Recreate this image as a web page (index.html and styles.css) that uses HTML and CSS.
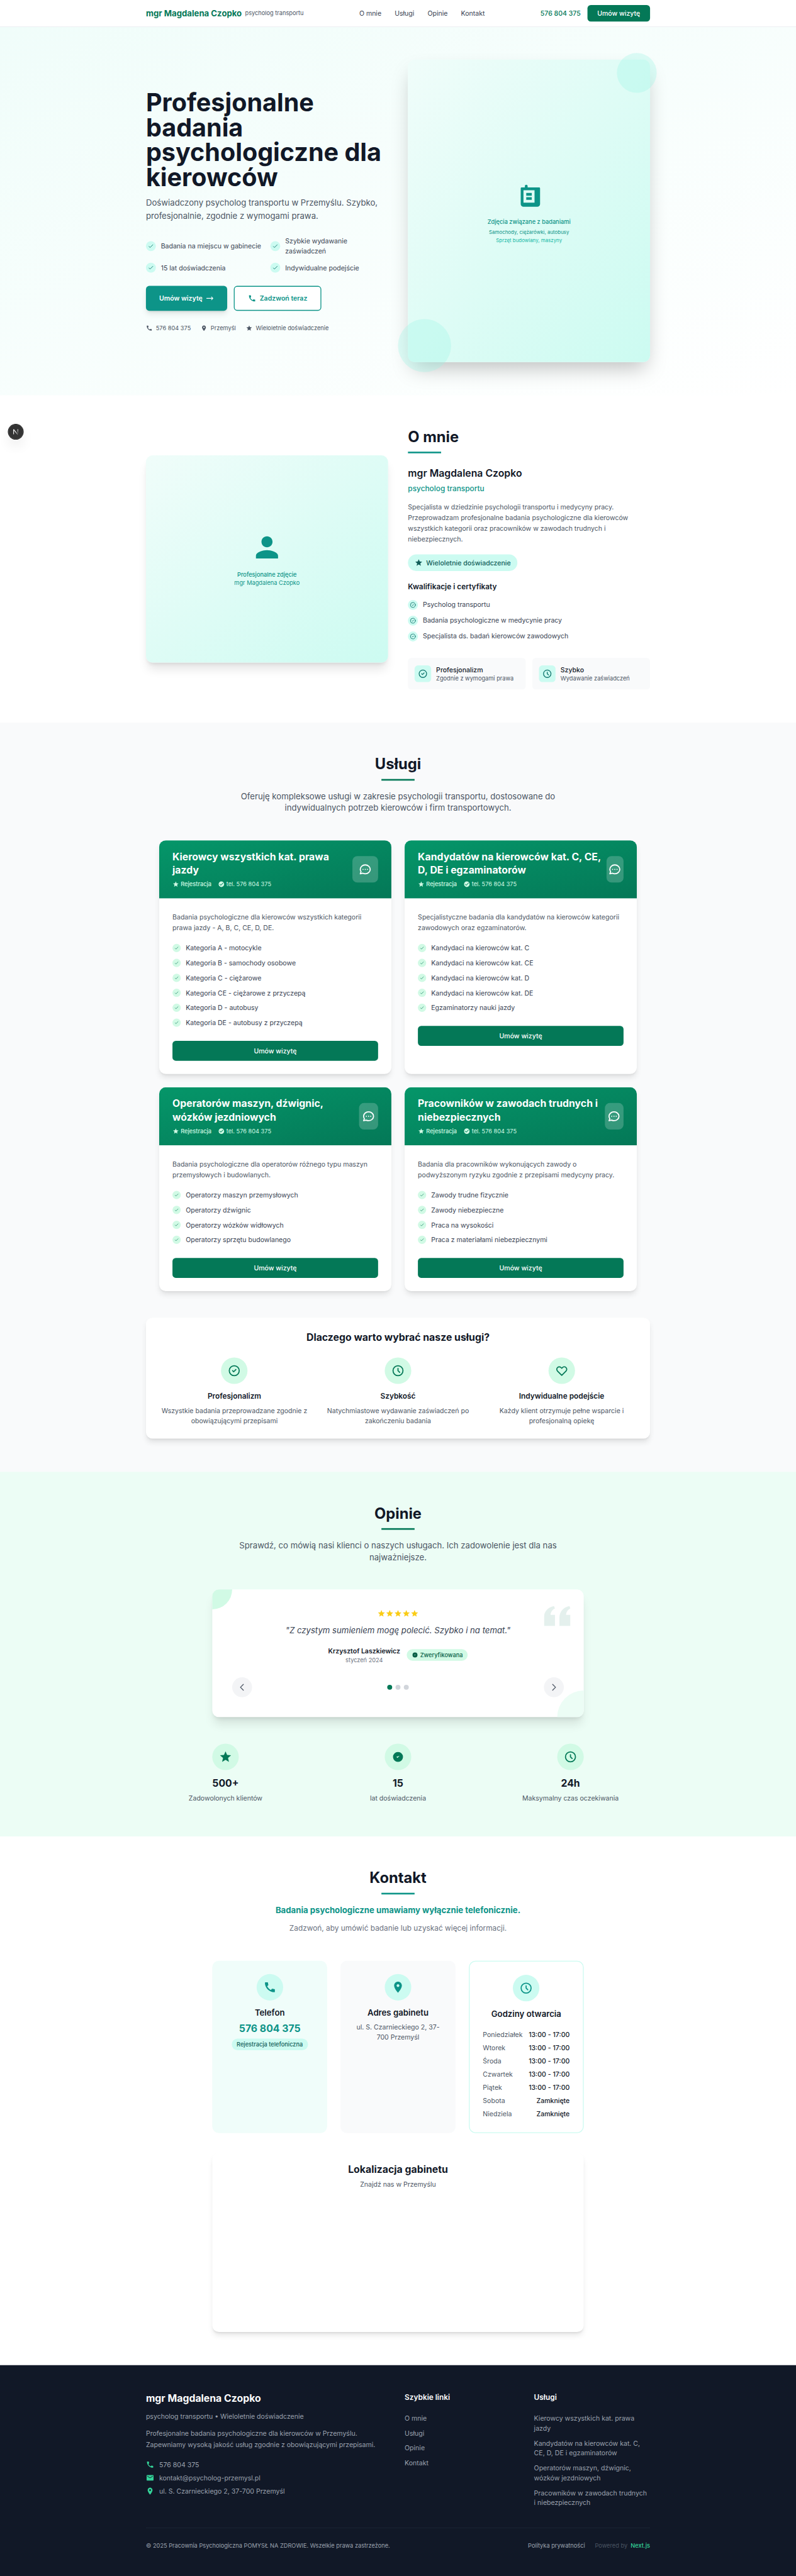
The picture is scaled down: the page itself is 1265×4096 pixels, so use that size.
FILE: index.html
```html
<!DOCTYPE html>
<html lang="pl">
<head>
<meta charset="utf-8">
<meta name="viewport" content="width=device-width, initial-scale=1">
<title>mgr Magdalena Czopko – psycholog transportu</title>
<link rel="stylesheet" href="styles.css">
</head>
<body>
<svg class="sprite" aria-hidden="true">
  <symbol id="i-phone" viewBox="0 0 24 24"><path fill="currentColor" d="M20.01 15.38c-1.23 0-2.42-.2-3.53-.56-.35-.12-.74-.03-1.01.24l-1.57 1.97c-2.83-1.35-5.48-3.9-6.89-6.83l1.95-1.66c.27-.28.35-.67.24-1.02-.37-1.11-.56-2.3-.56-3.53 0-.54-.45-.99-.99-.99H4.19C3.65 3 3 3.24 3 3.99 3 13.28 10.73 21 20.01 21c.71 0 .99-.63.99-1.18v-3.45c0-.54-.45-.99-.99-.99z"/></symbol>
  <symbol id="i-pin" viewBox="0 0 24 24"><path fill="currentColor" d="M12 2C8.13 2 5 5.13 5 9c0 5.25 7 13 7 13s7-7.75 7-13c0-3.87-3.13-7-7-7zm0 9.5c-1.38 0-2.5-1.12-2.5-2.5s1.12-2.5 2.5-2.5 2.5 1.12 2.5 2.5-1.12 2.5-2.5 2.5z"/></symbol>
  <symbol id="i-star" viewBox="0 0 24 24"><path fill="currentColor" d="M12 17.27L18.18 21l-1.64-7.03L22 9.24l-7.19-.61L12 2 9.19 8.63 2 9.24l5.46 4.73L5.82 21z"/></symbol>
  <symbol id="i-mail" viewBox="0 0 24 24"><path fill="currentColor" d="M20 4H4c-1.1 0-1.99.9-1.99 2L2 18c0 1.1.9 2 2 2h16c1.1 0 2-.9 2-2V6c0-1.1-.9-2-2-2zm0 4l-8 5-8-5V6l8 5 8-5v2z"/></symbol>
  <symbol id="i-person" viewBox="0 0 24 24"><path fill="currentColor" d="M12 12c2.21 0 4-1.79 4-4s-1.79-4-4-4-4 1.79-4 4 1.79 4 4 4zm0 2c-2.67 0-8 1.34-8 4v2h16v-2c0-2.66-5.33-4-8-4z"/></symbol>
  <symbol id="i-board" viewBox="0 0 24 24"><path fill="currentColor" fill-rule="evenodd" d="M9 7V6a1 1 0 0 1 2 0v1h8.5a.7.7 0 0 1 .5.7V19a2 2 0 0 1-2 2H8a2 2 0 0 1-2-2V7.7a.7.7 0 0 1 .5-.7zM8 9v9h8V9zM10 11h4v2h-4zM10 14h4v2h-4z"/></symbol>
  <symbol id="i-done" viewBox="0 0 24 24"><path fill="currentColor" d="M12 2C6.48 2 2 6.48 2 12s4.48 10 10 10 10-4.48 10-10S17.52 2 12 2zm-2 15l-5-5 1.41-1.41L10 14.17l7.59-7.59L19 8l-9 9z"/></symbol>
  <symbol id="i-verified" viewBox="0 0 24 24"><path fill="currentColor" d="M9 12l2 2 4-4m6 2a9 9 0 11-18 0 9 9 0 0118 0z"/></symbol>
  <symbol id="i-quote" viewBox="0 0 24 24"><path fill="currentColor" d="M14.017 21v-7.391c0-5.704 3.731-9.57 8.983-10.609l.995 2.151c-2.432.917-3.995 3.638-3.995 5.849h4v10h-9.983zm-14.017 0v-7.391c0-5.704 3.748-9.57 9-10.609l.996 2.151c-2.433.917-3.996 3.638-3.996 5.849h3.983v10h-9.983z"/></symbol>
  <symbol id="i-check" viewBox="0 0 24 24"><path class="ln" d="M5 13l4 4L19 7"/></symbol>
  <symbol id="i-ring" viewBox="0 0 24 24"><path class="ln" d="M9 12l2 2 4-4m6 2a9 9 0 11-18 0 9 9 0 0118 0z"/></symbol>
  <symbol id="i-clock" viewBox="0 0 24 24"><path class="ln" d="M12 8v4l3 3m6-3a9 9 0 11-18 0 9 9 0 0118 0z"/></symbol>
  <symbol id="i-heart" viewBox="0 0 24 24"><path class="ln" d="M4.318 6.318a4.5 4.5 0 000 6.364L12 20.364l7.682-7.682a4.5 4.5 0 00-6.364-6.364L12 7.636l-1.318-1.318a4.5 4.5 0 00-6.364 0z"/></symbol>
  <symbol id="i-arrow" viewBox="0 0 24 24"><path class="ln" d="M17 8l4 4m0 0l-4 4m4-4H3"/></symbol>
  <symbol id="i-prev" viewBox="0 0 24 24"><path class="ln" d="M15 19l-7-7 7-7"/></symbol>
  <symbol id="i-next" viewBox="0 0 24 24"><path class="ln" d="M9 5l7 7-7 7"/></symbol>
  <symbol id="i-chat" viewBox="0 0 24 24"><path class="ln" d="M8 12h.01M12 12h.01M16 12h.01M21 12c0 4.418-4.03 8-9 8a9.863 9.863 0 01-4.255-.949L3 20l1.395-3.72C3.512 15.042 3 13.574 3 12c0-4.418 4.03-8 9-8s9 3.582 9 8z"/></symbol>
</svg>

<div class="page">
<header class="top">
  <div class="wrap top-row">
    <div class="brand"><span class="brand-name">mgr Magdalena Czopko</span><span class="brand-sub">psycholog transportu</span></div>
    <nav class="nav"><a>O mnie</a><a>Usługi</a><a>Opinie</a><a>Kontakt</a></nav>
    <div class="top-cta"><a class="top-phone">576 804 375</a><a class="top-btn">Umów wizytę</a></div>
  </div>
</header>

<main>
<section class="hero">
  <div class="wrap split">
    <div>
      <h1>Profesjonalne badania psychologiczne dla kierowców</h1>
      <p class="lead">Doświadczony psycholog transportu w Przemyślu. Szybko, profesjonalnie, zgodnie z wymogami prawa.</p>
      <ul class="feats">
        <li><i class="dot24"><svg class="s16"><use href="#i-check"/></svg></i>Badania na miejscu w gabinecie</li>
        <li><i class="dot24"><svg class="s16"><use href="#i-check"/></svg></i>Szybkie wydawanie zaświadczeń</li>
        <li><i class="dot24"><svg class="s16"><use href="#i-check"/></svg></i>15 lat doświadczenia</li>
        <li><i class="dot24"><svg class="s16"><use href="#i-check"/></svg></i>Indywidualne podejście</li>
      </ul>
      <div class="btns">
        <a class="btn btn-fill">Umów wizytę<svg class="s20"><use href="#i-arrow"/></svg></a>
        <a class="btn btn-line"><svg class="s20"><use href="#i-phone"/></svg>Zadzwoń teraz</a>
      </div>
      <div class="facts">
        <span><svg class="s16"><use href="#i-phone"/></svg>576 804 375</span>
        <span><svg class="s16"><use href="#i-pin"/></svg>Przemyśl</span>
        <span><svg class="s16"><use href="#i-star"/></svg>Wieloletnie doświadczenie</span>
      </div>
    </div>
    <div class="hero-media">
      <div class="photo photo-tall">
        <svg class="s80"><use href="#i-board"/></svg>
        <p class="cap">Zdjęcia związane z badaniami</p>
        <p class="cap-s">Samochody, ciężarówki, autobusy</p>
        <p class="cap-s light">Sprzęt budowlany, maszyny</p>
      </div>
      <span class="bubble bubble-a"></span><span class="bubble bubble-b"></span>
    </div>
  </div>
</section>

<section class="about">
  <div class="wrap split">
    <div class="photo photo-wide">
      <svg class="s80"><use href="#i-person"/></svg>
      <p class="cap">Profesjonalne zdjęcie</p>
      <p class="cap reg">mgr Magdalena Czopko</p>
    </div>
    <div>
      <h2>O mnie</h2>
      <div class="bar teal"></div>
      <h3 class="about-name">mgr Magdalena Czopko</h3>
      <p class="about-role">psycholog transportu</p>
      <p class="about-text">Specjalista w dziedzinie psychologii transportu i medycyny pracy. Przeprowadzam profesjonalne badania psychologiczne dla kierowców wszystkich kategorii oraz pracowników w zawodach trudnych i niebezpiecznych.</p>
      <span class="exp"><svg class="s20"><use href="#i-star"/></svg>Wieloletnie doświadczenie</span>
      <h4>Kwalifikacje i certyfikaty</h4>
      <ul class="quals">
        <li><i class="dot24"><svg class="s16"><use href="#i-ring"/></svg></i>Psycholog transportu</li>
        <li><i class="dot24"><svg class="s16"><use href="#i-ring"/></svg></i>Badania psychologiczne w medycynie pracy</li>
        <li><i class="dot24"><svg class="s16"><use href="#i-ring"/></svg></i>Specjalista ds. badań kierowców zawodowych</li>
      </ul>
      <div class="perks">
        <div class="perk"><i class="tile"><svg class="s24"><use href="#i-ring"/></svg></i><div><b>Profesjonalizm</b><small>Zgodnie z wymogami prawa</small></div></div>
        <div class="perk"><i class="tile"><svg class="s24"><use href="#i-clock"/></svg></i><div><b>Szybko</b><small>Wydawanie zaświadczeń</small></div></div>
      </div>
    </div>
  </div>
</section>

<section class="services">
  <div class="wrap">
    <div class="head">
      <h2>Usługi</h2>
      <div class="bar"></div>
      <p>Oferuję kompleksowe usługi w zakresie psychologii transportu, dostosowane do indywidualnych potrzeb kierowców i firm transportowych.</p>
    </div>
    <div class="cards">
      <article class="card">
        <header><div><h3>Kierowcy wszystkich kat. prawa jazdy</h3><p class="meta"><span class="med"><svg class="s16"><use href="#i-star"/></svg>Rejestracja</span><span><svg class="s16"><use href="#i-done"/></svg>tel. 576 804 375</span></p></div><i class="chat"><svg class="s32"><use href="#i-chat"/></svg></i></header>
        <div class="body">
          <p>Badania psychologiczne dla kierowców wszystkich kategorii prawa jazdy - A, B, C, CE, D, DE.</p>
          <ul>
            <li><i><svg class="s12"><use href="#i-check"/></svg></i>Kategoria A - motocykle</li>
            <li><i><svg class="s12"><use href="#i-check"/></svg></i>Kategoria B - samochody osobowe</li>
            <li><i><svg class="s12"><use href="#i-check"/></svg></i>Kategoria C - ciężarowe</li>
            <li><i><svg class="s12"><use href="#i-check"/></svg></i>Kategoria CE - ciężarowe z przyczepą</li>
            <li><i><svg class="s12"><use href="#i-check"/></svg></i>Kategoria D - autobusy</li>
            <li><i><svg class="s12"><use href="#i-check"/></svg></i>Kategoria DE - autobusy z przyczepą</li>
          </ul>
          <a class="card-btn">Umów wizytę</a>
        </div>
      </article>
      <article class="card">
        <header><div><h3>Kandydatów na kierowców kat. C, CE, D, DE i egzaminatorów</h3><p class="meta"><span class="med"><svg class="s16"><use href="#i-star"/></svg>Rejestracja</span><span><svg class="s16"><use href="#i-done"/></svg>tel. 576 804 375</span></p></div><i class="chat"><svg class="s32"><use href="#i-chat"/></svg></i></header>
        <div class="body">
          <p>Specjalistyczne badania dla kandydatów na kierowców kategorii zawodowych oraz egzaminatorów.</p>
          <ul>
            <li><i><svg class="s12"><use href="#i-check"/></svg></i>Kandydaci na kierowców kat. C</li>
            <li><i><svg class="s12"><use href="#i-check"/></svg></i>Kandydaci na kierowców kat. CE</li>
            <li><i><svg class="s12"><use href="#i-check"/></svg></i>Kandydaci na kierowców kat. D</li>
            <li><i><svg class="s12"><use href="#i-check"/></svg></i>Kandydaci na kierowców kat. DE</li>
            <li><i><svg class="s12"><use href="#i-check"/></svg></i>Egzaminatorzy nauki jazdy</li>
          </ul>
          <a class="card-btn">Umów wizytę</a>
        </div>
      </article>
      <article class="card">
        <header><div><h3>Operatorów maszyn, dźwignic, wózków jezdniowych</h3><p class="meta"><span class="med"><svg class="s16"><use href="#i-star"/></svg>Rejestracja</span><span><svg class="s16"><use href="#i-done"/></svg>tel. 576 804 375</span></p></div><i class="chat"><svg class="s32"><use href="#i-chat"/></svg></i></header>
        <div class="body">
          <p>Badania psychologiczne dla operatorów różnego typu maszyn przemysłowych i budowlanych.</p>
          <ul>
            <li><i><svg class="s12"><use href="#i-check"/></svg></i>Operatorzy maszyn przemysłowych</li>
            <li><i><svg class="s12"><use href="#i-check"/></svg></i>Operatorzy dźwignic</li>
            <li><i><svg class="s12"><use href="#i-check"/></svg></i>Operatorzy wózków widłowych</li>
            <li><i><svg class="s12"><use href="#i-check"/></svg></i>Operatorzy sprzętu budowlanego</li>
          </ul>
          <a class="card-btn">Umów wizytę</a>
        </div>
      </article>
      <article class="card">
        <header><div><h3>Pracowników w zawodach trudnych i niebezpiecznych</h3><p class="meta"><span class="med"><svg class="s16"><use href="#i-star"/></svg>Rejestracja</span><span><svg class="s16"><use href="#i-done"/></svg>tel. 576 804 375</span></p></div><i class="chat"><svg class="s32"><use href="#i-chat"/></svg></i></header>
        <div class="body">
          <p>Badania dla pracowników wykonujących zawody o podwyższonym ryzyku zgodnie z przepisami medycyny pracy.</p>
          <ul>
            <li><i><svg class="s12"><use href="#i-check"/></svg></i>Zawody trudne fizycznie</li>
            <li><i><svg class="s12"><use href="#i-check"/></svg></i>Zawody niebezpieczne</li>
            <li><i><svg class="s12"><use href="#i-check"/></svg></i>Praca na wysokości</li>
            <li><i><svg class="s12"><use href="#i-check"/></svg></i>Praca z materiałami niebezpiecznymi</li>
          </ul>
          <a class="card-btn">Umów wizytę</a>
        </div>
      </article>
    </div>
    <div class="why">
      <h3>Dlaczego warto wybrać nasze usługi?</h3>
      <div class="thirds">
        <div><i class="orb"><svg class="s32"><use href="#i-ring"/></svg></i><h4>Profesjonalizm</h4><p>Wszystkie badania przeprowadzane zgodnie z obowiązującymi przepisami</p></div>
        <div><i class="orb"><svg class="s32"><use href="#i-clock"/></svg></i><h4>Szybkość</h4><p>Natychmiastowe wydawanie zaświadczeń po zakończeniu badania</p></div>
        <div><i class="orb"><svg class="s32"><use href="#i-heart"/></svg></i><h4>Indywidualne podejście</h4><p>Każdy klient otrzymuje pełne wsparcie i profesjonalną opiekę</p></div>
      </div>
    </div>
  </div>
</section>

<section class="reviews">
  <div class="wrap">
    <div class="head">
      <h2>Opinie</h2>
      <div class="bar"></div>
      <p>Sprawdź, co mówią nasi klienci o naszych usługach. Ich zadowolenie jest dla nas najważniejsze.</p>
    </div>
    <div class="review">
      <span class="corner-a"></span><span class="corner-b"></span>
      <svg class="quote"><use href="#i-quote"/></svg>
      <div class="stars"><svg class="s20"><use href="#i-star"/></svg><svg class="s20"><use href="#i-star"/></svg><svg class="s20"><use href="#i-star"/></svg><svg class="s20"><use href="#i-star"/></svg><svg class="s20"><use href="#i-star"/></svg></div>
      <blockquote>"Z czystym sumieniem mogę polecić. Szybko i na temat."</blockquote>
      <div class="author">
        <div><b>Krzysztof Laszkiewicz</b><small>styczeń 2024</small></div>
        <span class="ok"><svg class="s16"><use href="#i-verified"/></svg>Zweryfikowana</span>
      </div>
      <div class="pager">
        <button><svg class="s24"><use href="#i-prev"/></svg></button>
        <div class="dots"><i class="on"></i><i></i><i></i></div>
        <button><svg class="s24"><use href="#i-next"/></svg></button>
      </div>
    </div>
    <div class="thirds stats">
      <div><i class="orb"><svg class="s32"><use href="#i-star"/></svg></i><b>500+</b><p>Zadowolonych klientów</p></div>
      <div><i class="orb"><svg class="s32"><use href="#i-verified"/></svg></i><b>15</b><p>lat doświadczenia</p></div>
      <div><i class="orb"><svg class="s32"><use href="#i-clock"/></svg></i><b>24h</b><p>Maksymalny czas oczekiwania</p></div>
    </div>
  </div>
</section>

<section class="contact">
  <div class="head">
    <h2>Kontakt</h2>
    <div class="bar teal"></div>
    <p class="strong">Badania psychologiczne umawiamy wyłącznie telefonicznie.</p>
    <p class="soft">Zadzwoń, aby umówić badanie lub uzyskać więcej informacji.</p>
  </div>
  <div class="boxes">
    <div class="box box-phone"><i class="orb"><svg class="s32"><use href="#i-phone"/></svg></i><h3>Telefon</h3><a class="big">576 804 375</a><span class="tag">Rejestracja telefoniczna</span></div>
    <div class="box box-addr"><i class="orb"><svg class="s32"><use href="#i-pin"/></svg></i><h3>Adres gabinetu</h3><p>ul. S. Czarnieckiego 2, 37-700 Przemyśl</p></div>
    <div class="box box-hours"><i class="orb"><svg class="s32"><use href="#i-clock"/></svg></i><h3>Godziny otwarcia</h3>
      <dl>
        <div><dt>Poniedziałek</dt><dd>13:00 - 17:00</dd></div>
        <div><dt>Wtorek</dt><dd>13:00 - 17:00</dd></div>
        <div><dt>Środa</dt><dd>13:00 - 17:00</dd></div>
        <div><dt>Czwartek</dt><dd>13:00 - 17:00</dd></div>
        <div><dt>Piątek</dt><dd>13:00 - 17:00</dd></div>
        <div><dt>Sobota</dt><dd>Zamknięte</dd></div>
        <div><dt>Niedziela</dt><dd>Zamknięte</dd></div>
      </dl>
    </div>
  </div>
  <div class="map"><h3>Lokalizacja gabinetu</h3><p>Znajdź nas w Przemyślu</p><div class="map-area"></div></div>
</section>
</main>

<footer class="foot">
  <div class="wrap">
    <div class="foot-grid">
      <div class="foot-main">
        <h3>mgr Magdalena Czopko</h3>
        <p>psycholog transportu • Wieloletnie doświadczenie</p>
        <p class="desc">Profesjonalne badania psychologiczne dla kierowców w Przemyślu. Zapewniamy wysoką jakość usług zgodnie z obowiązującymi przepisami.</p>
        <ul class="reach">
          <li><svg class="s20"><use href="#i-phone"/></svg>576 804 375</li>
          <li><svg class="s20"><use href="#i-mail"/></svg>kontakt@psycholog-przemysl.pl</li>
          <li><svg class="s20"><use href="#i-pin"/></svg>ul. S. Czarnieckiego 2, 37-700 Przemyśl</li>
        </ul>
      </div>
      <div><h4>Szybkie linki</h4><ul class="links"><li>O mnie</li><li>Usługi</li><li>Opinie</li><li>Kontakt</li></ul></div>
      <div><h4>Usługi</h4><ul class="links"><li>Kierowcy wszystkich kat. prawa jazdy</li><li>Kandydatów na kierowców kat. C, CE, D, DE i egzaminatorów</li><li>Operatorów maszyn, dźwignic, wózków jezdniowych</li><li>Pracowników w zawodach trudnych i niebezpiecznych</li></ul></div>
    </div>
    <div class="foot-end">
      <span>© 2025 Pracownia Psychologiczna POMYSŁ NA ZDROWIE. Wszelkie prawa zastrzeżone.</span>
      <div class="foot-right"><span>Polityka prywatności</span><span class="pow">Powered by<b>Next.js</b></span></div>
    </div>
  </div>
</footer>

<div class="dev"><svg viewBox="0 0 40 40" fill="none"><defs><linearGradient id="n1" x1="0" y1="13" x2="0" y2="27" gradientUnits="userSpaceOnUse"><stop offset="0" stop-color="#fff"/><stop offset="1" stop-color="#fff" stop-opacity="0"/></linearGradient><linearGradient id="n2" x1="20" y1="20" x2="27" y2="29" gradientUnits="userSpaceOnUse"><stop offset="0" stop-color="#fff"/><stop offset="1" stop-color="#fff" stop-opacity=".1"/></linearGradient></defs><path d="M14.3 26.5V13.5" stroke="#fff" stroke-width="1.8"/><path d="M14.3 13.8L25.5 28" stroke="url(#n2)" stroke-width="1.9"/><path d="M25.5 13v13" stroke="url(#n1)" stroke-width="1.7"/></svg></div>
</div>
</body>
</html>
```
FILE: styles.css
```css
/* The page is laid out on a 1920px canvas (1rem = 10px) and scaled to a 1265px window */
html { font-size: 10px; }
*, *::before, *::after { box-sizing: border-box; margin: 0; padding: 0; }
body { width: 100%; height: 4096px; overflow: hidden; background: #fff; }
.page {
  position: relative;
  width: 192rem;
  height: 621.68rem;
  margin: 0 -65.5rem -212.08rem 0;
  overflow: hidden;
  transform: scale(.658854);
  transform-origin: 0 0;
  font: 400 1.6rem/2.4rem Inter, "Liberation Sans", sans-serif;
  color: #111827;
  background: #fff;
}
ul { list-style: none; }
i { font-style: normal; }
svg { display: block; flex-shrink: 0; }
.sprite { position: absolute; width: 0; height: 0; }
.ln { fill: none; stroke: currentColor; stroke-width: 2; stroke-linecap: round; stroke-linejoin: round; }
.s12 { width: 1.2rem; height: 1.2rem; }
.s16 { width: 1.6rem; height: 1.6rem; }
.s20 { width: 2rem; height: 2rem; }
.s24 { width: 2.4rem; height: 2.4rem; }
.s32 { width: 3.2rem; height: 3.2rem; }
.s80 { width: 8rem; height: 8rem; }

.wrap { width: 121.6rem; margin: 0 auto; }
.split { display: grid; grid-template-columns: 1fr 1fr; gap: 4.8rem; align-items: center; }
h2 { font-size: 3.6rem; line-height: 4rem; font-weight: 700; }
.bar { width: 8rem; height: .4rem; margin-top: 1.6rem; background: #047857; }
.bar.teal { background: #0d9488; }
.head { display: flex; flex-direction: column; align-items: center; text-align: center; margin-bottom: 6.4rem; }
.head p { width: 76.8rem; margin-top: 2.4rem; font-size: 2rem; line-height: 2.8rem; color: #4b5563; }

/* header */
.top { position: relative; height: 6.5rem; margin-bottom: -.1rem; border-bottom: .1rem solid #e5e7eb; background: #fff; }
.top-row { display: flex; justify-content: space-between; align-items: center; height: 6.4rem; }
.brand { display: flex; align-items: center; gap: .8rem; }
.brand-name { font-size: 2rem; line-height: 2.8rem; font-weight: 700; color: #047857; }
.brand-sub { font-size: 1.4rem; line-height: 2rem; color: #4b5563; }
.nav { display: flex; gap: 3.2rem; color: #374151; }
.top-cta { display: flex; align-items: center; gap: 1.6rem; font-weight: 500; }
.top-phone { color: #047857; }
.top-btn { padding: .8rem 2.4rem; border-radius: .8rem; background: #047857; color: #fff; }

/* hero */
.hero { padding: 8rem 0; background: linear-gradient(to bottom right, #f0fdfa, #fff); }
h1 { font-size: 6rem; line-height: 6rem; font-weight: 700; }
.lead { margin-top: 1.6rem; font-size: 2rem; line-height: 3.25rem; color: #4b5563; }
.feats { display: grid; grid-template-columns: 1fr 1fr; gap: 1.6rem; margin-top: 3.2rem; color: #374151; }
.feats li { display: flex; align-items: center; gap: 1.2rem; }
.dot24 { display: flex; flex-shrink: 0; align-items: center; justify-content: center; width: 2.4rem; height: 2.4rem; border-radius: 50%; background: #ccfbf1; color: #0f766e; }
.btns { display: flex; gap: 1.6rem; margin-top: 3.2rem; }
.btn { display: flex; align-items: center; gap: .8rem; padding: 1.6rem 3.2rem; border-radius: .8rem; font-weight: 600; }
.btn-fill { background: #0d9488; color: #fff; box-shadow: 0 1rem 1.5rem -.3rem rgba(0,0,0,.1), 0 .4rem .6rem -.4rem rgba(0,0,0,.1); }
.btn-line { border: .2rem solid #0d9488; background: #fff; color: #0d9488; }
.facts { display: flex; gap: 2.4rem; margin-top: 3.2rem; font-size: 1.4rem; line-height: 2rem; color: #4b5563; }
.facts span { display: flex; align-items: center; gap: .8rem; }
.hero-media { position: relative; }
.photo { display: flex; flex-direction: column; align-items: center; justify-content: center; border-radius: 1.6rem; background: linear-gradient(to bottom right, #f0fdfa, #ccfbf1); color: #0d9488; text-align: center; }
.photo-tall { height: 73rem; box-shadow: 0 2.5rem 5rem -1.2rem rgba(0,0,0,.25); }
.photo-wide { height: 50rem; box-shadow: 0 2rem 2.5rem -.5rem rgba(0,0,0,.1), 0 .8rem 1rem -.6rem rgba(0,0,0,.1); }
.cap { font-size: 1.4rem; line-height: 2rem; font-weight: 500; }
.photo svg + .cap { margin-top: 1.6rem; }
.cap.reg { font-weight: 400; }
.cap-s { margin-top: .8rem; font-size: 1.2rem; line-height: 1.6rem; }
.cap-s.light { margin-top: .4rem; color: #14b8a6; }
.bubble { position: absolute; border-radius: 50%; background: #99f6e4; }
.bubble-a { top: -1.6rem; right: -1.6rem; width: 9.6rem; height: 9.6rem; opacity: .3; }
.bubble-b { bottom: -2.4rem; left: -2.4rem; width: 12.8rem; height: 12.8rem; opacity: .3; }

/* about */
.about { padding: 8rem 0; }
.about-name { margin-top: 3.2rem; font-size: 2.4rem; line-height: 3.2rem; font-weight: 600; }
.about-role { margin-top: .8rem; font-size: 1.8rem; line-height: 2.8rem; font-weight: 500; color: #0d9488; }
.about-text { margin-top: 1.6rem; line-height: 2.6rem; color: #4b5563; }
.exp { display: inline-flex; align-items: center; gap: .8rem; margin-top: 2.4rem; padding: .8rem 1.6rem; border-radius: 2rem; background: #ccfbf1; color: #115e59; font-weight: 500; vertical-align: top; }
.about h4 { margin-top: 2.4rem; font-size: 1.8rem; line-height: 2.8rem; font-weight: 600; }
.quals { display: flex; flex-direction: column; gap: 1.2rem; margin-top: 1.6rem; color: #374151; }
.quals li { display: flex; align-items: flex-start; gap: 1.2rem; }
.quals .dot24 { margin-top: .2rem; }
.perks { display: grid; grid-template-columns: 1fr 1fr; gap: 1.6rem; margin-top: 4rem; }
.perk { display: flex; align-items: center; gap: 1.2rem; padding: 1.6rem; border-radius: .8rem; background: #f9fafb; }
.perk b { display: block; font-weight: 500; }
.perk small { display: block; font-size: 1.4rem; line-height: 2rem; color: #4b5563; }
.tile { display: flex; align-items: center; justify-content: center; width: 4rem; height: 4rem; border-radius: .8rem; background: #ccfbf1; color: #0f766e; }

/* services */
.services { padding: 8rem 0; background: #f9fafb; }
.cards { display: grid; grid-template-columns: 1fr 1fr; gap: 3.2rem; width: 115.2rem; margin: 0 auto; }
.card { overflow: hidden; border-radius: 1.6rem; background: #fff; }
.card, .why, .map { box-shadow: 0 1rem 1.5rem -.3rem rgba(0,0,0,.1), 0 .4rem .6rem -.4rem rgba(0,0,0,.1); }
.card header { display: flex; align-items: center; justify-content: space-between; padding: 2.4rem 3.2rem; background: linear-gradient(to bottom right, #059669, #047857); color: #fff; }
.card h3 { font-size: 2.4rem; line-height: 3.2rem; font-weight: 700; }
.meta { display: flex; gap: 1.6rem; margin-top: .8rem; font-size: 1.4rem; line-height: 2rem; color: #d1fae5; }
.meta span { display: flex; align-items: center; gap: .4rem; }
.meta .med { font-weight: 500; }
.chat { display: flex; align-items: center; justify-content: center; width: 6.4rem; height: 6.4rem; border-radius: 1.2rem; background: rgba(255,255,255,.2); }
.body { padding: 3.2rem; }
.body p { line-height: 2.6rem; color: #4b5563; }
.body ul { display: flex; flex-direction: column; gap: 1.2rem; margin: 2.4rem 0 3.2rem; color: #374151; }
.body li { display: flex; align-items: center; gap: 1.2rem; }
.body li i { display: flex; align-items: center; justify-content: center; width: 2rem; height: 2rem; border-radius: 50%; background: #d1fae5; color: #047857; }
.card-btn { display: block; padding: 1.2rem; border-radius: .8rem; background: #047857; color: #fff; font-weight: 500; text-align: center; }
.why { margin-top: 6.4rem; padding: 3.2rem; border-radius: 1.6rem; background: #fff; text-align: center; }
.why h3 { margin-bottom: 3.2rem; font-size: 2.4rem; line-height: 3.2rem; font-weight: 700; }
.thirds { display: grid; grid-template-columns: repeat(3, 1fr); gap: 3.2rem; text-align: center; }
.orb { display: flex; align-items: center; justify-content: center; width: 6.4rem; height: 6.4rem; margin: 0 auto 1.6rem; border-radius: 50%; background: #d1fae5; color: #047857; }
.why h4 { margin-bottom: .8rem; font-size: 1.8rem; line-height: 2.8rem; font-weight: 600; }
.thirds p { color: #4b5563; }

/* reviews */
.reviews { padding: 8rem 0; background: #ecfdf5; }
.review { position: relative; overflow: hidden; width: 89.6rem; margin: 0 auto 6.4rem; padding: 4.8rem; border-radius: 1.6rem; background: #fff; text-align: center; box-shadow: 0 2rem 2.5rem -.5rem rgba(0,0,0,.1), 0 .8rem 1rem -.6rem rgba(0,0,0,.1); }
.corner-a { position: absolute; top: -4.8rem; left: -4.8rem; width: 9.6rem; height: 9.6rem; border-radius: 50%; background: #d1fae5; }
.corner-b { position: absolute; right: -6.4rem; bottom: -6.4rem; width: 12.8rem; height: 12.8rem; border-radius: 50%; background: #ecfdf5; }
.quote { position: absolute; top: 3.2rem; right: 3.2rem; width: 6.4rem; height: 6.4rem; color: #047857; opacity: .1; }
.stars { display: flex; justify-content: center; color: #facc15; }
blockquote { margin-top: 1.6rem; font-size: 2rem; line-height: 2.8rem; font-style: italic; color: #374151; }
.author { display: flex; align-items: center; justify-content: center; gap: 1.6rem; margin-top: 2.4rem; }
.author b { display: block; font-weight: 600; }
.author small { display: block; font-size: 1.4rem; line-height: 2rem; color: #6b7280; }
.ok { display: flex; align-items: center; gap: .4rem; padding: .4rem 1.2rem; border-radius: 1.4rem; background: #d1fae5; color: #065f46; font-size: 1.4rem; line-height: 2rem; font-weight: 500; }
.pager { position: relative; display: flex; align-items: center; justify-content: space-between; margin-top: 3.2rem; }
.pager button { display: flex; align-items: center; justify-content: center; width: 4.8rem; height: 4.8rem; border: 0; border-radius: 50%; background: #f3f4f6; color: #4b5563; }
.dots { display: flex; gap: .8rem; }
.dots i { width: 1.2rem; height: 1.2rem; border-radius: 50%; background: #d1d5db; }
.dots .on { background: #047857; }
.stats b { display: block; margin-bottom: .8rem; font-size: 2.4rem; line-height: 3.2rem; font-weight: 700; }

/* contact */
.contact { padding: 8rem 0; }
.head .strong { font-weight: 700; color: #0d9488; }
.head .soft { margin-top: 1.6rem; font-size: 1.8rem; color: #6b7280; }
.boxes { display: grid; grid-template-columns: repeat(3, 1fr); gap: 3.2rem; width: 89.6rem; margin: 0 auto; }
.box { padding: 3.2rem; border-radius: 1.6rem; text-align: center; }
.box .orb { background: #ccfbf1; color: #0d9488; }
.box h3 { font-size: 2rem; line-height: 2.8rem; font-weight: 600; }
.box-phone { background: #f0fdfa; }
.box-addr { background: #f9fafb; }
.box-hours { border: .2rem solid #ccfbf1; }
.big { display: block; margin-top: .8rem; font-size: 2.4rem; line-height: 3.2rem; font-weight: 700; color: #0d9488; }
.tag { display: inline-block; margin-top: .8rem; padding: .4rem 1.2rem; border-radius: 1.4rem; background: #ccfbf1; color: #115e59; font-size: 1.4rem; line-height: 2rem; font-weight: 500; }
.box p { margin-top: .8rem; color: #4b5563; }
dl { display: flex; flex-direction: column; gap: .8rem; margin-top: 2.4rem; }
dl div { display: flex; justify-content: space-between; }
dt { color: #4b5563; }
dd { font-weight: 500; }
.map { width: 89.6rem; margin: 4.8rem auto 0; padding-top: 2.4rem; border-radius: 1.6rem; background: #fff; text-align: center; }
.map h3 { font-size: 2.4rem; line-height: 3.2rem; font-weight: 700; }
.map p { margin-top: .8rem; color: #4b5563; }
.map-area { height: 34.4rem; }

/* footer */
.foot { padding: 6.4rem 0; background: #111827; color: #9ca3af; }
.foot-grid { display: grid; grid-template-columns: repeat(4, 1fr); gap: 3.2rem; }
.foot-main { grid-column: span 2; }
.foot h3 { margin-bottom: 1.6rem; font-size: 2.4rem; line-height: 3.2rem; font-weight: 700; color: #fff; }
.foot h4 { font-size: 1.8rem; line-height: 2.8rem; font-weight: 600; color: #fff; }
.desc { margin-top: 1.6rem; line-height: 2.6rem; }
.reach { display: flex; flex-direction: column; gap: .8rem; margin-top: 2.4rem; }
.reach li { display: flex; align-items: center; gap: 1.2rem; }
.reach svg { color: #34d399; }
.links { display: flex; flex-direction: column; gap: 1.2rem; margin-top: 2.4rem; }
.foot-end { display: flex; align-items: center; justify-content: space-between; margin-top: 4.8rem; padding-top: 3.2rem; border-top: .1rem solid #1f2937; font-size: 1.4rem; line-height: 2rem; }
.foot-right { display: flex; gap: 2.4rem; }
.pow { display: flex; gap: .8rem; color: #4b5563; }
.pow b { font-weight: 500; color: #34d399; }

/* framework dev badge */
.dev { position: absolute; top: 102.4rem; left: 2rem; width: 3.6rem; height: 3.6rem; border-radius: 50%; background: #333; box-shadow: 0 0 0 .1rem #171717, inset 0 0 0 .1rem rgba(255,255,255,.14), 0 1.6rem 3.2rem -.8rem rgba(0,0,0,.24); }
.dev svg { width: 3.6rem; height: 3.6rem; }
```
